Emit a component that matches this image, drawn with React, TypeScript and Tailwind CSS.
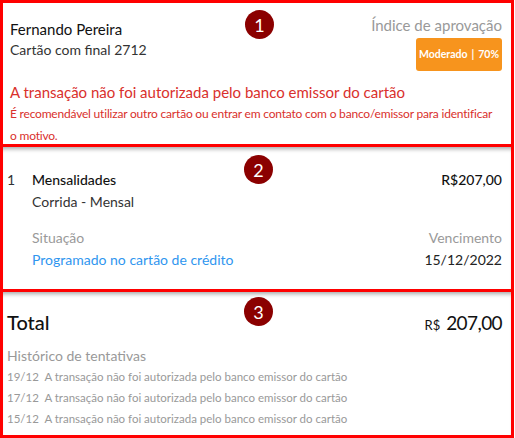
const font = { fontFamily: "Lato, 'Open Sans', sans-serif" };

function Marker({ n, className }: { n: number; className: string }) {
  return (
    <div
      className={`absolute flex h-[29px] w-[29px] items-center justify-center rounded-full bg-[#8b0000] text-[18px] leading-none text-white ${className}`}
    >
      {n}
    </div>
  );
}

const tentativas = ["19/12", "17/12", "15/12"];

export default function App() {
  return (
    <div className="relative h-[438px] w-[515px] overflow-hidden bg-white text-[#222]" style={font}>
      {/* cartão */}
      <section className="h-[147px] w-[514px] border-[3px] border-[#ff0000] px-[7px] pt-[12px]">
        <div className="flex items-start justify-between pr-[2px]">
          <div className="mt-[4px]">
            <div className="text-[15px] leading-[20px] text-[#111]">Fernando Pereira</div>
            <div className="text-[14px] leading-[21px] text-[#333]">Cartão com final 2712</div>
          </div>
          <div className="flex flex-col items-end">
            <div className="text-[15px] leading-[20px] text-[#999]">Índice de aprovação</div>
            <div className="mt-[3px] flex h-[33px] w-[86px] items-center justify-center whitespace-nowrap rounded-[3px] bg-[#f7941d] text-[10.5px] font-bold text-white">
              Moderado<span className="mx-[4px]">|</span>70%
            </div>
          </div>
        </div>
        <div className="mt-[10px] text-[15px] leading-[22px] text-[#d9302c]">
          A transação não foi autorizada pelo banco emissor do cartão
        </div>
        <div className="mr-[-6px] text-[12px] leading-[22px] tracking-[-0.2px] text-[#d9302c]">
          <span className="whitespace-nowrap">
            É recomendável utilizar outro cartão ou entrar em contato com o banco/emissor para identificar
          </span>
          <br />o motivo.
        </div>
      </section>

      {/* parcela */}
      <section className="h-[145px] w-[514px] border-[3px] border-t-0 border-[#ff0000] pl-[4px] pr-[9px] pt-[22px] shadow-[inset_0_5px_4px_-3px_rgba(0,0,0,0.35)]">
        <div className="flex justify-between text-[14px] leading-[22px]">
          <div className="flex">
            <span className="w-[25px] text-[#333]">1</span>
            <div>
              <div className="font-medium text-[#111]">Mensalidades</div>
              <div className="text-[#333]">Corrida - Mensal</div>
            </div>
          </div>
          <div className="font-medium text-[#111]">R$207,00</div>
        </div>
        <div className="mt-[14px] flex justify-between pl-[25px] text-[14px] leading-[22px]">
          <div>
            <div className="text-[#999]">Situação</div>
            <div className="text-[#2f96ef]">Programado no cartão de crédito</div>
          </div>
          <div className="text-right">
            <div className="text-[#999]">Vencimento</div>
            <div className="text-[#222]">15/12/2022</div>
          </div>
        </div>
      </section>

      {/* total */}
      <section className="h-[146px] w-[514px] border-[3px] border-t-0 border-[#ff0000] pl-[4px] pr-[9px] pt-[16px] shadow-[inset_0_5px_4px_-3px_rgba(0,0,0,0.35)]">
        <div className="flex items-baseline justify-between leading-[28px]">
          <div className="text-[20px] font-medium text-[#111]">Total</div>
          <div className="text-[#111]">
            <span className="mr-[6px] text-[13px]">R$</span>
            <span className="text-[19px] tracking-[-0.6px]">207,00</span>
          </div>
        </div>
        <div className="mt-[7px] text-[14px] leading-[20px] text-[#999]">Histórico de tentativas</div>
        {tentativas.map((d) => (
          <div key={d} className="text-[11.5px] leading-[21px] text-[#999]">
            {d}&nbsp;&nbsp;A transação não foi autorizada pelo banco emissor do cartão
          </div>
        ))}
      </section>

      <Marker n={1} className="left-[245px] top-[10px]" />
      <Marker n={2} className="left-[244px] top-[155px]" />
      <Marker n={3} className="left-[244px] top-[297px]" />
    </div>
  );
}
